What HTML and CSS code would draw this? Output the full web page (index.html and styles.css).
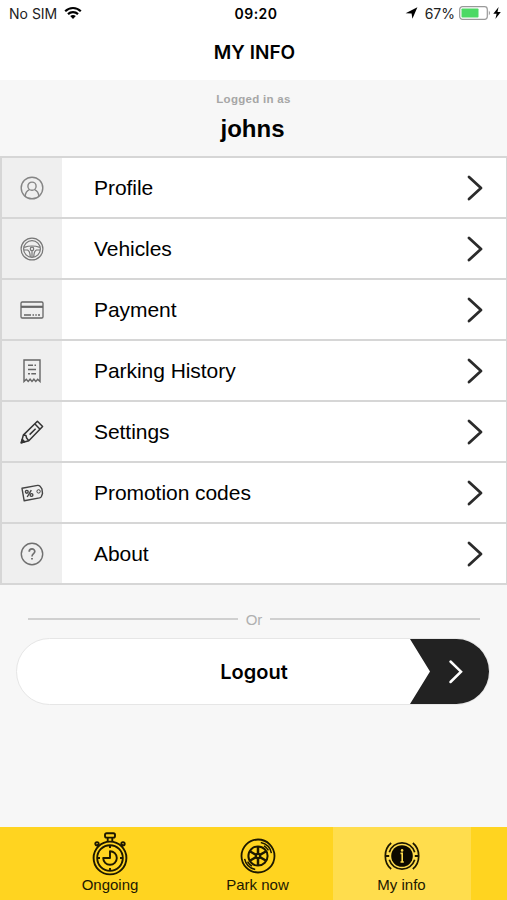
FILE: index.html
```html
<!DOCTYPE html>
<html lang="en">
<head>
    <meta charset="UTF-8">
    <meta name="viewport" content="width=device-width, initial-scale=1.0">
    <title>My Info</title>
    <link rel="stylesheet" href="styles.css">
</head>
<body>
    <!-- shared chevron -->
    <svg class="defs" width="0" height="0">
        <symbol id="chevron" viewBox="0 0 16 26">
            <path d="M2 2 L14 13 L2 24" fill="none" stroke="currentColor" stroke-width="2.8" stroke-linecap="round" stroke-linejoin="round"/>
        </symbol>
    </svg>

    <div class="screen">
        <div class="status-bar">
            <div class="status-left">
                <span>No SIM</span>
                <svg width="18" height="14" viewBox="0 0 18 14" fill="none" stroke="#000" stroke-width="2.2">
                    <path d="M1.2 5.2 C5.6 0.9 12.4 0.9 16.8 5.2"/>
                    <path d="M4 8.1 C6.8 5.4 11.2 5.4 14 8.1"/>
                    <path d="M6.2 10 Q9 7.8 11.8 10 L9 12.9 Z" fill="#000" stroke="none"/>
                </svg>
            </div>
            <div class="status-time">09:20</div>
            <div class="status-right">
                <svg width="13" height="12" viewBox="0 0 13 12">
                    <path d="M12.4 0.3 L7.4 11.8 L6.6 6.6 L0.6 6.2 Z" fill="#000"/>
                </svg>
                <span class="percent">67%</span>
                <svg width="32" height="14" viewBox="0 0 32 14">
                    <rect x="0.7" y="0.7" width="27.6" height="12.6" rx="2.8" fill="#fff" stroke="#999" stroke-width="1.2"/>
                    <rect x="2.5" y="2.5" width="17" height="9" rx="0.8" fill="#4cd964"/>
                    <path d="M29.8 4.5 Q32.2 7 29.8 9.5 Z" fill="#999"/>
                </svg>
                <svg class="bolt" width="8" height="12" viewBox="0 0 8 12">
                    <path d="M5.6 0 L0.3 6.8 H3.6 L2.4 12 L7.8 4.9 H4.5 Z" fill="#000"/>
                </svg>
            </div>
        </div>

        <h1>MY INFO</h1>

        <div class="user">
            <p class="user-label">Logged in as</p>
            <p class="user-name">johns</p>
        </div>

        <ul class="menu">
            <li class="menu-item">
                <div class="menu-icon">
                    <svg width="24" height="24" viewBox="0 0 24 24" fill="none" stroke="#858585" stroke-width="1.4">
                        <circle cx="12" cy="12" r="10.8"/>
                        <circle cx="12" cy="10.2" r="4.1"/>
                        <path d="M5.2 20.2 C5.4 16.4 7 14.6 9.4 13.6 M18.8 20.2 C18.6 16.4 17 14.6 14.6 13.6"/>
                    </svg>
                </div>
                <span>Profile</span>
                <svg class="arrow"><use href="#chevron"/></svg>
            </li>
            <li class="menu-item">
                <div class="menu-icon">
                    <svg width="24" height="24" viewBox="0 0 24 24" fill="none" stroke="#777" stroke-width="1.2">
                        <circle cx="12" cy="12" r="10.9"/>
                        <circle cx="12" cy="12" r="8.4"/>
                        <path d="M4.2 10.4 Q12 7.6 19.8 10.4 M3.9 13 H7.6 Q10.2 14.4 10.2 20 M20.1 13 H16.4 Q13.8 14.4 13.8 20"/>
                        <circle cx="12" cy="11.9" r="1.7"/>
                        <path d="M12 13.6 V20"/>
                    </svg>
                </div>
                <span>Vehicles</span>
                <svg class="arrow"><use href="#chevron"/></svg>
            </li>
            <li class="menu-item">
                <div class="menu-icon">
                    <svg width="24" height="18" viewBox="0 0 24 18" fill="none" stroke="#666" stroke-width="1.3">
                        <rect x="1" y="1" width="22" height="16" rx="1.2"/>
                        <path d="M1 5.8 H23" stroke-width="2.2"/>
                        <path d="M4 14 H11 M12.5 14 H14 M15.3 14 H16.8 M18 14 H20" stroke-width="1.4"/>
                    </svg>
                </div>
                <span>Payment</span>
                <svg class="arrow"><use href="#chevron"/></svg>
            </li>
            <li class="menu-item">
                <div class="menu-icon">
                    <svg width="18" height="24" viewBox="0 0 18 24" fill="none" stroke="#666" stroke-width="1.4">
                        <path d="M1 1 H17 V22.5 L14.7 20.2 L12.8 22.5 L10.9 20.2 L9 22.5 L7.1 20.2 L5.2 22.5 L3.3 20.2 L1 22.5 Z"/>
                        <path d="M5 6.3 H10 M11.5 6.3 H13 M5 10.5 H13 M5 14.7 H7 M8.3 14.7 H13"/>
                    </svg>
                </div>
                <span>Parking History</span>
                <svg class="arrow"><use href="#chevron"/></svg>
            </li>
            <li class="menu-item">
                <div class="menu-icon">
                    <svg width="24" height="24" viewBox="0 0 24 24" fill="none" stroke="#333" stroke-width="1.5" stroke-linejoin="round">
                        <path d="M1.3 22.7 L3.3 15.1 L17.4 1.3 L22.6 6.5 L8.8 20.7 Z"/>
                        <path d="M3.3 15.1 L6 15.6 L6.6 18 L8.8 20.7 M15 4 L20 9.2 M9.6 14.6 L15.6 8.8"/>
                        <path d="M1.3 22.7 L2.2 19.4 L4.6 21.8 Z" fill="#333"/>
                    </svg>
                </div>
                <span>Settings</span>
                <svg class="arrow"><use href="#chevron"/></svg>
            </li>
            <li class="menu-item">
                <div class="menu-icon">
                    <svg width="24" height="18" viewBox="0 0 24 18" fill="none" stroke="#444" stroke-width="1.4" stroke-linejoin="round">
                        <path d="M2 4.3 L17.6 1.4 Q19 1.2 20 2.2 L21.9 4.8 L22.5 9.4 L21.4 12.5 Q20.8 13.6 19.5 13.9 L4.2 16.8 Z"/>
                        <circle cx="18.6" cy="7.4" r="1.7" stroke-width="1"/>
                        <circle cx="6.8" cy="7.8" r="1.4"/>
                        <circle cx="11.5" cy="11" r="1.4"/>
                        <path d="M11.3 6.2 L7.2 13"/>
                    </svg>
                </div>
                <span>Promotion codes</span>
                <svg class="arrow"><use href="#chevron"/></svg>
            </li>
            <li class="menu-item">
                <div class="menu-icon">
                    <svg width="24" height="24" viewBox="0 0 24 24" fill="none" stroke="#707070" stroke-width="1.4">
                        <circle cx="12" cy="12" r="10.7"/>
                        <path d="M9.2 9.8 C9.2 6 14.8 6.1 14.8 9.5 C14.8 11.6 12 11.7 12 14.4" stroke-width="1.7"/>
                        <path d="M12 15.9 V17.6" stroke-width="1.9"/>
                    </svg>
                </div>
                <span>About</span>
                <svg class="arrow"><use href="#chevron"/></svg>
            </li>
        </ul>

        <div class="divider"><span>Or</span></div>

        <button class="logout">
            <span>Logout</span>
            <svg class="logout-end" width="79" height="65" viewBox="0 0 79 65">
                <path d="M0 0 H46.5 A32.5 32.5 0 0 1 46.5 65 H0 L20 32.5 Z" fill="#222"/>
                <path d="M40.5 22.5 L51 32.7 L40.5 43" fill="none" stroke="#fff" stroke-width="2.5" stroke-linecap="round"/>
            </svg>
        </button>

        <nav class="tabs">
            <a class="tab">
                <svg width="36" height="44" viewBox="0 0 36 44" fill="none" stroke="#1d1800" stroke-width="1.9">
                    <rect x="13" y="1.2" width="10" height="4.4" rx="1.6"/>
                    <path d="M15.7 5.6 V9.6 M20.3 5.6 V9.6"/>
                    <circle cx="18" cy="26" r="16.4"/>
                    <circle cx="18" cy="26" r="12.8"/>
                    <path d="M6.4 14.4 L4.8 12.6 M29.6 14.4 L31.2 12.6"/>
                    <circle cx="5" cy="11.8" r="1.7"/>
                    <circle cx="31" cy="11.8" r="1.7"/>
                    <path d="M18 13.5 V16 M18 36 V38.5 M5.5 26 H8 M28 26 H30.5"/>
                    <path d="M18 19.2 V26 H11.2 A6.8 6.8 0 1 0 18 19.2 Z" stroke-linejoin="round"/>
                </svg>
                <span>Ongoing</span>
            </a>
            <a class="tab tab-park">
                <svg width="36" height="36" viewBox="0 0 36 36" fill="none" stroke="#1d1800" stroke-width="1.8">
                    <circle cx="18" cy="18" r="16.5"/>
                    <circle cx="18" cy="18" r="9.6" stroke-width="2"/>
                    <!-- spokes and hub -->
                    <path d="M18 9 V27 M10.2 13.5 L25.8 22.5 M10.2 22.5 L25.8 13.5" stroke-width="2.5"/>
                    <circle cx="18" cy="18" r="3.2" fill="#1d1800" stroke="none"/>
                    <circle cx="18" cy="18" r="1.1" fill="#ffd420" stroke="none"/>
                    <g stroke-width="1.5">
                        <path id="tread" d="M20.8 4.6 A13.7 13.7 0 0 1 31.4 15.2 M24 7.8 A11.8 11.8 0 0 1 28.4 12.4"/>
                        <use href="#tread" transform="rotate(180 18 18)"/>
                    </g>
                </svg>
                <span>Park now</span>
            </a>
            <a class="tab tab-info active">
                <svg width="36" height="30" viewBox="0 0 36 30" fill="none" stroke="#1d1800" stroke-width="1.7">
                    <circle cx="18" cy="15" r="10.8" fill="#0d0b00" stroke="none"/>
                    <path d="M5.3 11.2 A13.3 13.3 0 0 1 30.7 11.2 M5.3 18.8 A13.3 13.3 0 0 0 30.7 18.8"/>
                    <path d="M1.5 15 H5.2 M34.5 15 H30.8" stroke-width="2"/>
                    <path d="M7.2 2 Q1.3 6.6 1.3 15 Q1.3 23.4 7.2 28 M28.8 2 Q34.7 6.6 34.7 15 Q34.7 23.4 28.8 28"/>
                    <path d="M16.5 12.4 H18.2 V21 M16.5 21 H19.8" stroke="#ffdd4d" stroke-width="1.6"/>
                    <circle cx="18.1" cy="9.4" r="1.3" fill="#ffdd4d" stroke="none"/>
                </svg>
                <span>My info</span>
            </a>
        </nav>
    </div>
</body>
</html>
```
FILE: styles.css
```css
* {
    margin: 0;
    padding: 0;
    box-sizing: border-box;
}

body {
    background-color: #f7f7f7;
    font-family: "Liberation Sans", Arial, sans-serif;
    color: #000;
}

.defs {
    display: block;
}

.screen {
    height: 900px;
    display: flex;
    flex-direction: column;
}

.status-bar {
    height: 28px;
    background: white;
    display: grid;
    grid-template-columns: 1fr auto 1fr;
    align-items: center;
    padding: 0 6px 2px 9px;
    font-family: Inter, sans-serif;
    font-size: 14px;
    color: #222;
}

.status-left,
.status-right {
    display: flex;
    align-items: center;
}

.status-left {
    gap: 7px;
}

.status-time {
    padding-left: 2px;
    font-weight: 600;
    font-size: 14px;
    letter-spacing: 0.5px;
    color: #000;
}

.status-right {
    justify-content: flex-end;
}

.percent {
    margin: 0 4px 0 7px;
}

.bolt {
    margin-left: 2px;
}

h1 {
    height: 52px;
    background: white;
    padding-left: 2px;
    text-align: center;
    font-family: Inter, sans-serif;
    font-size: 19px;
    font-weight: 600;
    line-height: 49px;
}

.user {
    height: 76px;
    padding-top: 12px;
    text-align: center;
}

.user-label {
    font-size: 11.5px;
    font-weight: bold;
    line-height: 14px;
    letter-spacing: 0.3px;
    color: #a6a6a6;
}

.user-name {
    margin-top: 9px;
    padding-right: 2px;
    font-size: 24px;
    font-weight: bold;
    line-height: 28px;
}

.menu {
    list-style: none;
    border: 2px solid #d6d6d6;
    border-width: 2px 1px 0 2px;
}

.menu-item {
    height: 61px;
    display: flex;
    align-items: center;
    background: white;
    border-bottom: 2px solid #d6d6d6;
    padding-right: 23px;
    font-size: 21px;
    letter-spacing: -0.05px;
}

.menu-icon {
    width: 60px;
    height: 100%;
    margin-right: 32px;
    padding-right: 1px;
    display: flex;
    align-items: center;
    justify-content: center;
    background: #efefef;
}

.arrow {
    width: 16px;
    height: 26px;
    margin-left: auto;
    color: #2b2b2b;
}

.divider {
    display: flex;
    align-items: center;
    gap: 8px;
    margin: 24px 27px 0 28px;
    height: 20px;
    font-size: 15px;
    color: #b0b0b0;
}

.divider::before,
.divider::after {
    content: "";
    flex: 1;
    height: 2px;
    background: #d0d0d0;
}

.logout {
    height: 67px;
    margin: 9px 17px 0 16px;
    display: flex;
    align-items: center;
    border: 1px solid #e6e6e6;
    border-radius: 34px;
    background: white;
    font-family: Inter, sans-serif;
    font-size: 20px;
    font-weight: 600;
    color: #000;
}

.logout span {
    flex: 1;
    padding-left: 81px;
    text-align: center;
}

.tabs {
    height: 73px;
    margin-top: auto;
    padding-right: 36px;
    display: flex;
    justify-content: flex-end;
    gap: 8px;
    background: #ffd420;
}

.tab {
    width: 138px;
    display: flex;
    flex-direction: column;
    align-items: center;
    justify-content: flex-end;
    padding-bottom: 7px;
    font-size: 15px;
    line-height: 17px;
    color: #1d1800;
}

.tab-park {
    padding-left: 3px;
}

.tab-park svg {
    margin-bottom: 2px;
}

.tab-info svg {
    margin-bottom: 5px;
}

.tab.active {
    padding-right: 1px;
    background: #ffdd4d;
}
```
